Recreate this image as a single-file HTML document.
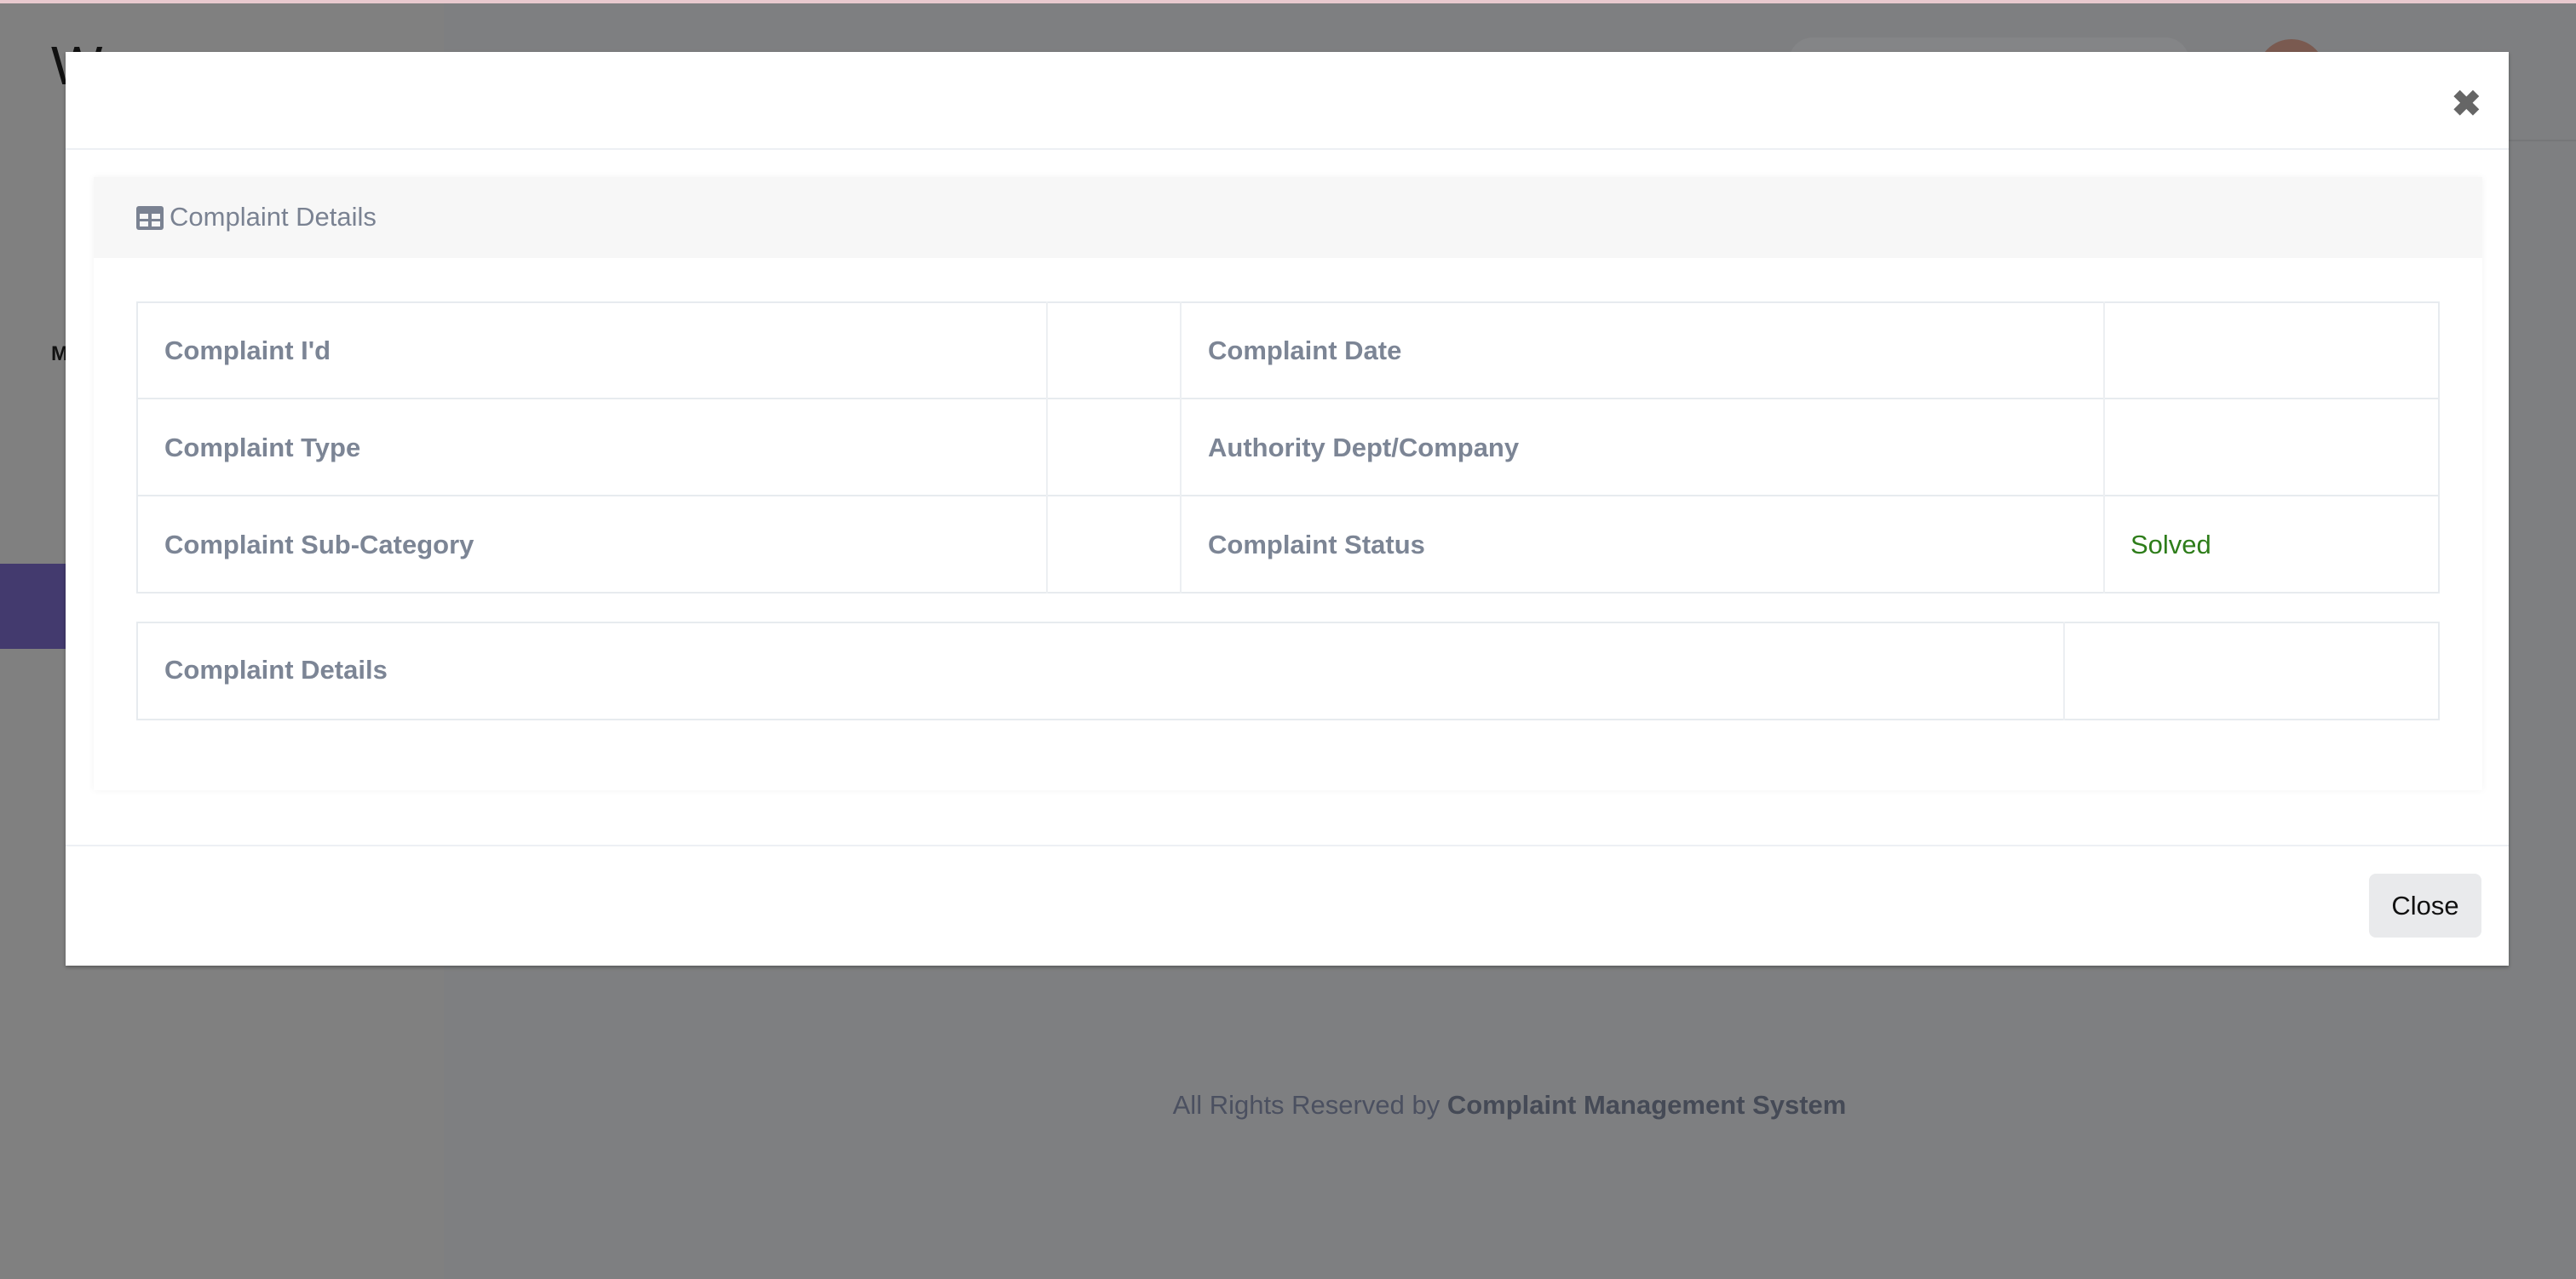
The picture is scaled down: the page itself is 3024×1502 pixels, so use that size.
<!DOCTYPE html>
<html><head><meta charset="utf-8"><style>
*{box-sizing:border-box;margin:0;padding:0}
body{width:3024px;height:1502px;overflow:hidden;background:#7e7f81;font-family:"Liberation Sans",sans-serif;position:relative}
.abs{position:absolute}
.lbl{font-weight:bold;color:#7c8595;font-size:31px}
.cell{position:absolute;border:2px solid #e7ebef}
</style></head><body>
<div class="abs" style="left:0;top:0;width:3024px;height:4px;background:#e8c9ce"></div>
<div class="abs" style="left:0;top:4px;width:521px;height:1498px;background:#808080"></div>
<div class="abs" style="left:521px;top:164px;width:2503px;height:2px;background:#767779"></div>
<div class="abs" style="left:0;top:662px;width:80px;height:100px;background:#433a6e"></div>
<div class="abs" style="left:60px;top:40px;font-size:64px;color:#111">W</div>
<div class="abs" style="left:60px;top:402px;font-size:24px;font-weight:bold;color:#111">M</div>
<div class="abs" style="left:2650px;top:46px;width:80px;height:80px;border-radius:50%;background:#7a5a50"></div>
<div class="abs" style="left:2100px;top:44px;width:470px;height:60px;border-radius:28px;background:#848587"></div>
<div class="abs" style="left:0;top:1280px;width:3024px;text-align:center;padding-left:520px;font-size:31px;color:#4b5060">All Rights Reserved by <b style="color:#454a56">Complaint Management System</b></div>

<div class="abs" style="left:77px;top:61px;width:2868px;height:1073px;background:#fff;box-shadow:0 2px 4px rgba(0,0,0,.3)">
  <div class="abs" style="left:0;top:113px;width:100%;height:2px;background:#edf0f4"></div>
  <div class="abs" style="right:32px;top:36px;font-size:42px;font-weight:bold;color:#666">✖</div>
  <div class="abs" style="left:33px;top:147px;width:2804px;height:720px;background:#fff;box-shadow:0 0 8px rgba(0,0,0,.05)">
    <div class="abs" style="left:0;top:0;width:100%;height:95px;background:#f7f7f7"></div>
    <svg class="abs" style="left:50px;top:34px" width="32" height="28" viewBox="0 0 32 28"><rect x="0" y="0" width="32" height="28" rx="3" fill="#7a8292"/><rect x="4" y="9" width="10" height="6" fill="#f7f7f7"/><rect x="18" y="9" width="10" height="6" fill="#f7f7f7"/><rect x="4" y="18" width="10" height="6" fill="#f7f7f7"/><rect x="18" y="18" width="10" height="6" fill="#f7f7f7"/></svg>
    <div class="abs" style="left:89px;top:29px;font-size:31px;color:#7a8292">Complaint Details</div>
  </div>
  <!-- table 1 -->
  <div class="cell" style="left:83px;top:293px;width:2704px;height:343px"></div>
  <div class="abs" style="left:83px;top:406px;width:2704px;height:2px;background:#e7ebef"></div>
  <div class="abs" style="left:83px;top:520px;width:2704px;height:2px;background:#e7ebef"></div>
  <div class="abs" style="left:1151px;top:293px;width:2px;height:343px;background:#eceff2"></div>
  <div class="abs" style="left:1308px;top:293px;width:2px;height:343px;background:#eceff2"></div>
  <div class="abs" style="left:2392px;top:293px;width:2px;height:343px;background:#eceff2"></div>
  <div class="abs lbl" style="left:116px;top:333px">Complaint I'd</div>
  <div class="abs lbl" style="left:116px;top:447px">Complaint Type</div>
  <div class="abs lbl" style="left:116px;top:561px">Complaint Sub-Category</div>
  <div class="abs lbl" style="left:1341px;top:333px">Complaint Date</div>
  <div class="abs lbl" style="left:1341px;top:447px">Authority Dept/Company</div>
  <div class="abs lbl" style="left:1341px;top:561px">Complaint Status</div>
  <div class="abs" style="left:2424px;top:561px;font-size:31px;color:#2e7d1a">Solved</div>
  <!-- table 2 -->
  <div class="cell" style="left:83px;top:669px;width:2704px;height:116px"></div>
  <div class="abs" style="left:2345px;top:669px;width:2px;height:116px;background:#eceff2"></div>
  <div class="abs lbl" style="left:116px;top:708px">Complaint Details</div>
  <div class="abs" style="left:0;top:931px;width:100%;height:2px;background:#edf0f4"></div>
  <div class="abs" style="left:2704px;top:965px;width:132px;height:75px;border-radius:8px;background:#e9eaec;font-size:31px;color:#111;text-align:center;line-height:75px">Close</div>
</div>
</body></html>
